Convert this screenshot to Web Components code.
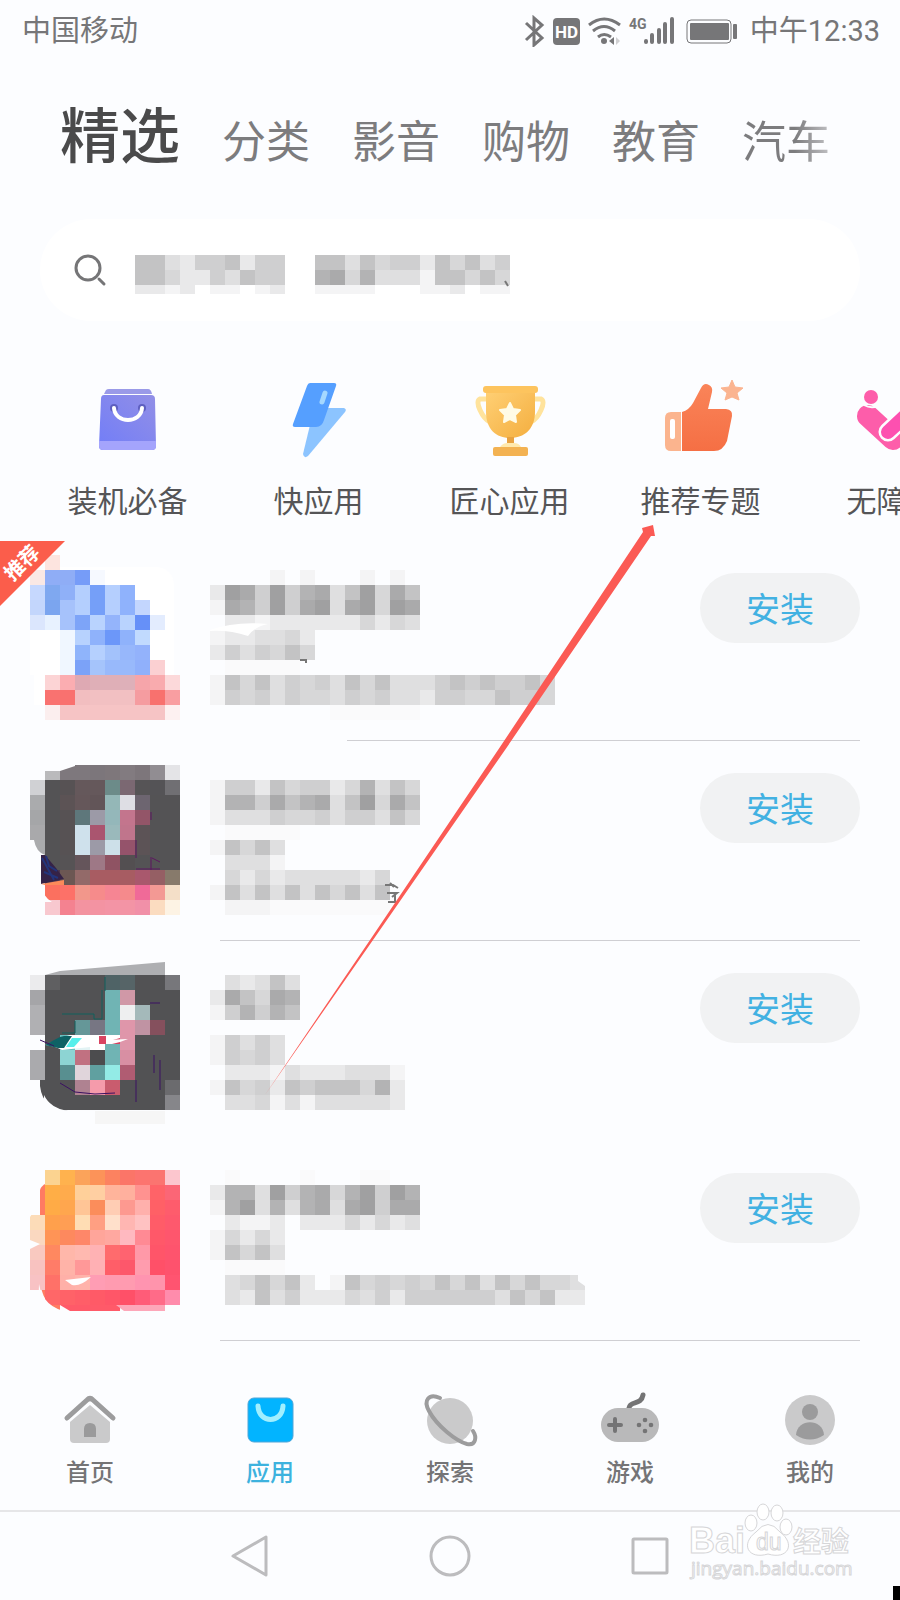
<!DOCTYPE html>
<html lang="zh-CN">
<head>
<meta charset="utf-8">
<meta name="viewport" content="width=device-width, initial-scale=1">
<title>应用市场</title>
<style>
    body {
        margin: 0;
        background: #fcfdff;
        color: #555557;
        font-family: Roboto, "Noto Sans CJK SC", sans-serif;
    }
</style>
</head>
<body>
<app-screen>
    <status-bar></status-bar>
    <category-tabs></category-tabs>
    <search-box></search-box>
    <shortcut-strip>
        <shortcut-item icon="bag">装机必备</shortcut-item>
        <shortcut-item icon="bolt">快应用</shortcut-item>
        <shortcut-item icon="trophy">匠心应用</shortcut-item>
        <shortcut-item icon="thumb">推荐专题</shortcut-item>
        <shortcut-item icon="care">无障碍</shortcut-item>
    </shortcut-strip>
    <main>
        <app-row art="one" class="short-line"><corner-ribbon slot="ribbon">推荐</corner-ribbon>安装</app-row>
        <app-row art="two">安装</app-row>
        <app-row art="three" class="no-line">安装</app-row>
        <app-row art="four">安装</app-row>
    </main>
    <bottom-nav>
        <nav-item icon="home">首页</nav-item>
        <nav-item icon="apps" class="active">应用</nav-item>
        <nav-item icon="planet">探索</nav-item>
        <nav-item icon="pad">游戏</nav-item>
        <nav-item icon="user">我的</nav-item>
    </bottom-nav>
    <system-nav></system-nav>
    <pointer-arrow></pointer-arrow>
</app-screen>

<script>
const CELL = 15;
const GREYS = ["#fafafb", "#f4f4f5", "#e9e9ea", "#dfdfe0", "#d7d7d8", "#cfcfd0", "#c3c3c4", "#b3b3b4", "#aaaaab", "#a0a0a1"];

// digits are grey levels, a dot is an empty cell
function greyRows(x, rows) {
    let out = "";
    for (const y in rows) {
        [...rows[y]].forEach((c, i) => {
            if (c !== ".") out += `<rect x="${x + i * CELL}" y="${y}" width="15" height="15" fill="${GREYS[c]}"/>`;
        });
    }
    return out;
}

// hex colours, a dash is an empty cell
function colorRows(x, rows) {
    let out = "";
    for (const y in rows) {
        rows[y].split(" ").forEach((c, i) => {
            if (c !== "-") out += `<rect x="${x + i * CELL}" y="${y}" width="15" height="15" fill="#${c}"/>`;
        });
    }
    return out;
}

const COVERS = {
    one: {
        top: 541,
        icon: `<path d="M54 567H154Q174 567 174 587V705H34V587Q34 567 54 567z" fill="#fff"/>` + colorRows(30, {
            555: "- fde4df",
            570: "fae8e4 8fadf6 8fadf6 769cf8 f6f9ff",
            585: "c6d8fe 7fa8f0 8fb0f8 b4cffe 759ff8 b5cffe 8fb2fc fff",
            600: "c3d6fc 7ba5ef a6c2fb b4cffe 759ff8 b5cffe 8fb2fc c3d6fe",
            615: "dbe6fd e8f2ff a6c2fb 7da4f8 b9d3fe 94b4fb b9d3fe 6690f8 e3ecfe",
            630: "fff fff f0f7ff b7d2fe 8fb2fb 6c97f9 8fb2fb c1dafe fff",
            645: "fff fff f0f7ff 8fb4fb b5d0fe a3c2fb 97b7fb 93b2fb fff",
            660: "fff fff f0f7ff 7ba2f8 a5c4fb 98b9fb 98b9fb 90b0fb fbd0d2",
            675: "- fcd4d5 fbadb1 dea9b3 dfafb7 dfafb7 deb0b9 f6a5aa f9abae fcd9da",
            690: "- f97270 f9716f f2bec0 f2c0c2 f2c0c2 f2c0c2 f59ca0 f8716e f99ea1",
            705: "- fbeeee f6c4c5 f6c4c5 f6c4c5 f6c4c5 f6c4c5 f6c4c5 f6c4c5 fdf1f1"
        }),
        lines: greyRows(210, {
            570: "....1.1...1.1",
            585: "29859578369486",
            600: "18759589389498",
            615: ".2212222224243",
            630: "1223342",
            645: "2535464",
            660: ".00000",
            675: "16463545364633356565564",
            690: "15453544354533255446554",
            705: "........000000"
        }) + `<path d="M210 630Q235 621 268 624Q254 627 248 636Q230 630 210 631z" fill="#fff"/><path d="M300 660h6v3" fill="none" stroke="#777" stroke-width="2"/>`
    },
    two: {
        top: 741,
        icon: `<path d="M60 771L78 765H150V780H60z" fill="#7e787d"/>` + colorRows(30, {
            765: "- - - 7e787d 7c767b 7e777b 827b80 7d767b 918d92 e4e4e7",
            780: "d0d1d4 545355 575254 65585b 65585b 6c8b89 7b6872 565456 545356 706f73",
            795: "aaabad 545355 5c5355 65575a 625558 94b7b7 dedee4 6d6570 545355 545355",
            810: "a5a6a8 545355 575254 5e777b 9c9aa7 94b7ba c3758d 935568 545355 545355",
            825: "a9a9ab 545355 575254 cfe1ec aa556f 9ab9bb c0758c 5c5356 545355 545355",
            840: "- 545355 575254 cfe1ec 9c9aa7 cde0e9 95536b 5c5356 545355 545355",
            855: "- 545355 565355 65555b 9e7886 8f5363 534f51 545355 545355 545355",
            870: "- 4c3850 6c5753 936a69 a85c62 a85c62 a75c62 a9586d 955f64 877a6b",
            885: "- fb705f fd7168 f2978b f68b8b f68593 f58a8c f06a98 f39994 f4dfc8",
            900: "- f8c8cf f48290 f393a0 f393a2 f394a5 f394a5 f190a8 fbdcc0 fdf3e4"
        }) + `<path d="M45 771H60V780H45z" fill="#bababc"/><path d="M41 855H45L56 868L64 879L41 884z" fill="#352247"/><path d="M42 858l12 22M46 856l3 10l8 5M44 872l14 6" stroke="#23347b" stroke-width="2" fill="none"/><path d="M41 884L64 880V885H45z" fill="#fb8a5a"/><path d="M34 840Q36 852 45 855V840z" fill="#aaabad"/><path d="M41 885Q43 897 52 902H45L40 906z" fill="#fcfdff"/><path d="M151 812v8M136 840v18M151 857v13M136 869h24M152 858l8 4" stroke="#5c1760" fill="none"/>`,
        lines: greyRows(210, {
            780: "15526455247364",
            795: "17758678369486",
            810: "13335445355364",
            825: ".00000",
            840: "16463",
            855: ".3331",
            870: ".42423333324",
            885: "163636364636",
            900: ".11100000000"
        }) + `<path d="M385 885h8l5 3M390 883l4 4M387 893h10l-5 4M388 902h8M395 893v8" fill="none" stroke="#777" stroke-width="2"/>`
    },
    three: {
        top: 941,
        icon: `<path d="M45 975L60 971L165 962V975z" fill="#aeafb2"/>` + colorRows(30, {
            975: "ebebed 5f5f61 525254 525254 525254 4f6366 566467 525254 525254 77777b",
            990: "a5a5a8 525254 525254 525254 525254 70b4b4 d098a7 525254 525254 525254",
            1005: "b0b0b3 525254 525254 525254 525254 70b4b4 eeeff0 a4b9ba 525254 525254",
            1020: "b0b0b3 525254 525254 659798 777683 70b4b4 df96aa c093a3 85505d 525254",
            1035: "- 525254 69c0c0 e2f3f4 fff d7415f df96aa 525254 525254 525254",
            1050: "aaaaad 525254 8dd4d3 c17181 4c4c4e 70b4b4 d88fa3 525254 525254 525254",
            1065: "aaaaad 525254 588f90 e0d5db 60a0a0 93ebe6 b05c72 525254 525254 525254",
            1080: "- 525254 525254 af8291 f59bab c95c6e 525254 525254 525254 6b6b6e",
            1095: "- 525254 525254 525254 525254 525254 525254 525254 525254 86868a"
        }) + `<path d="M40 1080V1086Q43 1110 68 1111H45V1080z" fill="#525254"/><path d="M44 1095Q50 1108 68 1111H44z" fill="#fcfdff"/><path d="M105 1035h15v3q-8 3-15 3z" fill="#fff"/><path d="M45 1045Q62 1037 70 1035H98L104 1040L128 1039Q115 1045 90 1047L62 1050Q55 1046 45 1045z" fill="#fff"/><path d="M45 1045Q52 1041 60 1037L64 1036H72L64 1048H58z" fill="#0d6265"/><path d="M72 1038H82L74 1047H66z" fill="#55efeb"/><path d="M99 1036h7v8h-7z" fill="#d94562"/><path d="M105 1044H120V1050H105z" fill="#70b4b4"/><path d="M62 1014h32v5h8V990M75 1021v12h-13M105 977v14" stroke="#11615d" fill="none"/><path d="M60 1083l15 9 20 2 20-1M136 1080v22M160 1090v-30M154 1055v18M40 1040l14 6M150 1003h10" stroke="#3b1062" fill="none"/><path d="M95 1111h70v13h-70z" fill="#f6f6f6"/>`,
        lines: greyRows(210, {
            975: ".32363",
            990: "286487",
            1005: "157576",
            1035: "15353",
            1050: "15453",
            1065: ".222132223331",
            1080: "1645265666472",
            1095: ".334131333332"
        })
    },
    four: {
        top: 1141,
        icon: `<path d="M40 1190Q42 1182 60 1180V1311Q42 1305 40 1280z" fill="#ff7b62"/>` + colorRows(30, {
            1170: "- fbd390 ffb24e fba35a fc9359 fc8260 fb7568 fc746f fb7470 fcc6ce",
            1185: "- ffae46 ffab4c ffd09a ffcfa2 ffb49b ffb09e ff9290 ff6368 fb6676",
            1200: "- ffab46 ffa64e ffc596 fb8d5b ffcdb4 fd9990 ffb0ac ff6066 fe5c6c",
            1215: "fcdcb8 ffa04c ff9e54 ffddb4 ff9f82 ffe0cb ffb6b2 ffc2c2 ff5c68 fe596d",
            1230: "fad8c0 ff9456 fd895e fe8769 ffa59a ffa8a0 ffb9c0 ff8a94 ff5869 fe566d",
            1245: "f9c9c0 ff8860 ffb7aa ffb9b0 ffb2b4 ff6b6d ff6370 ff99a8 ff5569 fe546d",
            1260: "f8c2c0 ff7c68 ffb3a8 ff9898 ffb0b4 ff5e68 fd576b ff9cae ff5068 fe526d",
            1275: "f8c2c4 ff7168 ffb0a8 ffb3aa ff9db4 ff9bb0 ff9bb0 ff94b0 ff94ac ff5470",
            1290: "- ff6768 ff6268 ff5e68 ff5a67 ff5668 ff5068 ff5c78 ff6b88 ff8cac"
        }) + `<path d="M65 1280L91 1277Q80 1287 72 1285z" fill="#fff"/><path d="M60 1305H120V1311H70z" fill="#ff5a69"/><path d="M116 1305H165V1311H124z" fill="#fda7b9"/><path d="M39 1284Q43 1308 69 1312H38z" fill="#fcfdff"/><path d="M30 1210h10q-8 3-10 7zM30 1240l10 4-10 5z" fill="#fcfdff"/>`,
        lines: greyRows(210, {
            1170: ".0....0...00",
            1185: "27739578479597",
            1200: "17937378389588",
            1215: ".2112.22242423",
            1230: "14242",
            1245: "16463",
            1260: ".0000",
            1275: ".346462.1645454646364644",
            1290: ".326352224352555555364622"
        }) + `<path d="M570 1275h8v6l7 5v4h-15z" fill="#dfdfe0"/>`
    },
    query: {
        lines: greyRows(135, {
            255: "6632556255..6636455264635",
            270: "6642253655..7847333166464",
            285: "2212.11.12..1111...112.11"
        }) + `<path d="M505 281l3 5" stroke="#777" stroke-width="2"/>`
    }
};

const SHORTCUT_ICONS = {
    bag: `<defs><linearGradient id="g" x1="1" y1="0" x2="0" y2="1"><stop stop-color="#928fe6"/><stop offset="1" stop-color="#717df8"/></linearGradient></defs>
        <path d="M16 16L18 12Q19 11 21 11H60Q63 11 64 16z" fill="#9a9ae8"/><path d="M16 17H63Q67 17 67 21L68 68Q68 72 64 72H15Q11 72 11 68L13 21Q13 17 16 17z" fill="url(#g)"/><path d="M11 63H68V68Q68 72 64 72H15Q11 72 11 68z" fill="#a4a4fc"/>
        <circle cx="26" cy="30" r="4" fill="#5e5fc0"/><circle cx="54" cy="30" r="4" fill="#5e5fc0"/><path d="M26 30C27 46 53 46 54 30" fill="none" stroke="#fff" stroke-width="4" stroke-linecap="round"/>`,
    bolt: `<path d="M48 30H65Q68 31 66 34L29 78Q25 81 24 76L31 47z" fill="#8cc4ff"/><path d="M31 5H55Q58 5 57 8L45 42Q43 49 37 49H16Q13 49 14 46L28 8Q29 5 31 5z" fill="#559fff"/><path d="M46 15L43 24" stroke="#a5d8ff" stroke-width="5" stroke-linecap="round"/>`,
    trophy: `<defs><linearGradient id="g" x1="0" y1="0" x2="1" y2="1"><stop stop-color="#ffd075"/><stop offset="1" stop-color="#f4ae3f"/></linearGradient></defs>
        <path d="M16 21H10Q6 23 10 32T20 44M65 21H71Q75 23 71 32T61 44" fill="none" stroke="#ffe39c" stroke-width="5"/><path d="M16 12H65V34C65 51 54 60 40 60S16 51 16 34z" fill="url(#g)"/><rect x="13" y="8" width="55" height="7" rx="3" fill="#fdc45e"/><rect x="37" y="59" width="7" height="9" fill="#e8a241"/><path d="M30 69Q33 65 37 65H44Q49 65 51 69z" fill="#ffe9ae"/><rect x="23" y="69" width="35" height="9" rx="2" fill="#f3b252"/>
        <path d="M40 25l3 6 7 1-5 5 1 7-6-3-6 3 1-7-5-5 7-1z" fill="#fffbe6" stroke="#fffbe6" stroke-width="2" stroke-linejoin="round"/>`,
    thumb: `<defs><linearGradient id="g" x1="0" y1="0" x2="0" y2="1"><stop stop-color="#fa8459"/><stop offset="1" stop-color="#f56f44"/></linearGradient></defs>
        <path d="M20 34H10Q4 34 4 40V67Q4 73 10 73H20z" fill="#fbb48e"/><rect x="9" y="41" width="5" height="20" rx="2" fill="#fff"/><path d="M21 34Q28 32 32 25L40 10Q43 4 48 7Q52 9 51 14L47 31H65Q72 32 71 38L66 63Q62 73 53 73H21z" fill="url(#g)"/><path d="M71 2l3 7 8 1-6 5 2 7-7-3-7 3 2-7-6-5 8-1z" fill="#fbb490" stroke="#fbb490" stroke-linejoin="round"/>`,
    care: `<circle cx="19" cy="19" r="7" fill="#fd5daa"/><path d="M16 38L41 61L68 38" fill="none" stroke="#fd5daa" stroke-width="22" stroke-linecap="round" stroke-linejoin="round"/><path d="M36 54L66 26" stroke="#fcfdff" stroke-width="19" stroke-linecap="round"/><path d="M36 54L66 26" stroke="#fd50b0" stroke-width="14" stroke-linecap="round"/><path d="M12 27Q19 31 26 28" stroke="#fcfdff" stroke-width="2" fill="none"/>`
};

const NAV_ICONS = {
    home: `<path d="M10 32L30 15L50 32V49Q50 53 46 53H14Q10 53 10 49z" fill="#cacacb"/><path d="M7 28L27 10Q30 7 33 10L53 28" fill="none" stroke="#9c9c9d" stroke-width="5" stroke-linecap="round"/><path d="M24 47V39Q24 33 30 33T36 39V47z" fill="#9a9a9b"/>`,
    apps: `<rect x="8" y="8" width="45" height="44" rx="6" fill="#02b4ff" stroke="#4fa6d8"/><path d="M18 16C19 34 42 34 43 16" fill="none" stroke="#a0efff" stroke-width="5" stroke-linecap="round"/>`,
    planet: `<circle cx="30" cy="31" r="23" fill="#cacacb"/><path d="M20 8C9 3 3 10 9 21C17 36 36 51 47 54C56 56 57 47 53 41" fill="none" stroke="#9c9c9d" stroke-width="4" stroke-linecap="round"/>`,
    pad: `<path d="M29 18C30 10 41 16 43 5" fill="none" stroke="#747475" stroke-width="5" stroke-linecap="round"/><rect x="1" y="18" width="58" height="34" rx="17" fill="#b9b9ba"/><path d="M9 35H21M15 29V41" stroke="#747475" stroke-width="4" stroke-linecap="round"/><g fill="#747475"><circle cx="39" cy="35" r="2.300"/><circle cx="51" cy="35" r="2.300"/><circle cx="45" cy="30" r="2.300"/><circle cx="45" cy="41" r="2.300"/></g>`,
    user: `<circle cx="30" cy="30" r="25" fill="#cacacb"/><circle cx="30" cy="22" r="8" fill="#9b9b9c"/><path d="M16 45C17 28 43 28 44 45Q30 54 16 45z" fill="#9b9b9c"/>`
};

class AppScreen extends HTMLElement {
    constructor() {
        super();
        this.attachShadow({mode: "open"}).innerHTML = `
        <style>
            :host { display: block; position: relative; overflow: hidden; }
        </style>
        <slot></slot>`;
    }
}

class StatusBar extends HTMLElement {
    constructor() {
        super();
        this.attachShadow({mode: "open"}).innerHTML = `
        <style>
            :host { display: flex; align-items: center; height: 62px; padding: 0 20px 0 22px; color: #767678; font-size: 29px; line-height: 40px; }
            span { flex: 1; }
            svg { margin-right: 10px; }
        </style>
        <span>中国移动</span>
        <svg width="216" height="32" viewBox="524 14 216 32" fill="#767678">
            <path d="M526 22L542 37L534 44V17L542 24L526 39" fill="none" stroke="#767678" stroke-width="3"/>
            <rect x="553" y="17" width="27" height="27" rx="4"/>
            <text x="555" y="37" font-family="Roboto" font-weight="700" font-size="17" fill="#fff">HD</text>
            <g fill="none" stroke="#767678" stroke-width="3"><path d="M589 24Q604 12 620 24M593 30Q604 21 615 30M598 36Q604 31 611 36"/></g>
            <circle cx="604" cy="40" r="3"/><path d="M609 40l5-4v8z"/><path d="M616 36l4 4-4 4z" fill="#d0d0d2"/>
            <text x="629" y="28" font-family="Roboto" font-weight="700" font-size="14">4G</text>
            <g stroke="#767678" stroke-width="4" stroke-linecap="round"><path d="M646 40v1M652 34v7M659 29v12M665 23v18M672 18v23"/></g>
            <rect x="687" y="19" width="44" height="23" rx="4" fill="none" stroke="#767678" stroke-width="1"/><rect x="690" y="22" width="39" height="17" rx="1"/><rect x="733" y="23" width="4" height="15" rx="1"/>
        </svg>
        <time>中午12:33</time>`;
    }
}

class CategoryTabs extends HTMLElement {
    constructor() {
        super();
        this.attachShadow({mode: "open"}).innerHTML = `
        <style>
            :host { display: block; padding: 46px 60px 0; }
            nav { display: flex; align-items: baseline; gap: 42px; white-space: nowrap; }
            a { color: #7c7c7e; font-size: 44px; line-height: 60px; text-decoration: none; }
            a.active { color: #4a4a4b; font-size: 60px; font-weight: 500; }
            a:last-child { background: linear-gradient(90deg, #7c7c7e 60%, #c0c0c3); -webkit-background-clip: text; color: transparent; }
        </style>
        <nav>
            <a href="#" class="active">精选</a><a href="#">分类</a><a href="#">影音</a><a href="#">购物</a><a href="#">教育</a><a href="#">汽车</a>
        </nav>`;
    }
}

class SearchBox extends HTMLElement {
    constructor() {
        super();
        this.attachShadow({mode: "open"}).innerHTML = `
        <style>
            :host { display: block; margin: 46px 40px 0; }
            label { display: grid; grid-template-columns: 34px 61px 1fr; align-items: center; height: 102px; border-radius: 51px; background: #fff; }
            .glass { grid-area: 1 / 2; }
            .cover, input { grid-area: 1 / 3; }
            rect { shape-rendering: crispEdges; }
            input { height: 60px; border: 0; outline: 0; background: none; font: inherit; font-size: 30px; }
        </style>
        <label>
            <svg class="glass" width="34" height="34" fill="none" stroke="#757577" stroke-width="3" stroke-linecap="round"><circle cx="14" cy="15" r="12"/><path d="M25 26L30 31"/></svg>
            <svg class="cover" width="380" height="48" viewBox="135 246 380 48">${COVERS.query.lines}</svg>
            <input type="search" aria-label="搜索">
        </label>`;
    }
}

class ShortcutStrip extends HTMLElement {
    constructor() {
        super();
        this.attachShadow({mode: "open"}).innerHTML = `
        <style>
            :host { display: flex; overflow: hidden; padding: 57px 0 19px 32px; }
        </style>
        <slot></slot>`;
    }
}

class ShortcutItem extends HTMLElement {
    connectedCallback() {
        this.attachShadow({mode: "open"}).innerHTML = `
        <style>
            :host { display: block; flex: 0 0 191px; }
            a { display: flex; flex-direction: column; align-items: center; gap: 24px; color: #555557; font-size: 30px; line-height: 40px; text-decoration: none; }
            svg { overflow: visible; }
        </style>
        <a href="#"><svg width="80" height="80">${SHORTCUT_ICONS[this.getAttribute("icon")]}</svg><slot></slot></a>`;
    }
}

class CornerRibbon extends HTMLElement {
    constructor() {
        super();
        this.attachShadow({mode: "open"}).innerHTML = `
        <style>
            :host { display: block; position: absolute; top: 0; left: 0; width: 65px; height: 65px; background: #fb5d4b; clip-path: polygon(0 0, 100% 0, 0 100%); }
            span { display: block; width: 44px; height: 44px; font-size: 20px; font-weight: 700; line-height: 44px; color: #fff; text-align: center; transform: rotate(-45deg); }
        </style>
        <span><slot></slot></span>`;
    }
}

class AppRow extends HTMLElement {
    connectedCallback() {
        const art = COVERS[this.getAttribute("art")];
        this.attachShadow({mode: "open"}).innerHTML = `
        <style>
            :host { display: block; position: relative; --line: #cfcfd3; --start: 220px; }
            :host(.short-line) { --start: 347px; }
            :host(.no-line) { --line: transparent; }
            .row { display: flex; align-items: flex-start; padding-right: 40px; }
            .lines { flex: 1; min-width: 0; }
            svg { display: block; }
            rect { shape-rendering: crispEdges; }
            button { width: 160px; height: 70px; margin-top: 32px; padding: 4px 0 0; border: 0; border-radius: 35px; background: #f1f2f3; color: #42b1e2; font: inherit; font-size: 34px; line-height: 66px; }
            hr { height: 1px; margin: 0 40px 0 var(--start); border: 0; background: var(--line); }
        </style>
        <div class="row">
            <svg width="210" height="199" viewBox="0 ${art.top} 210 199">${art.icon}</svg>
            <div class="lines"><svg width="400" height="199" viewBox="210 ${art.top} 400 199">${art.lines}</svg></div>
            <button type="button"><slot></slot></button>
        </div>
        <hr>
        <slot name="ribbon"></slot>`;
    }
}

class BottomNav extends HTMLElement {
    constructor() {
        super();
        this.attachShadow({mode: "open"}).innerHTML = `
        <style>
            :host { display: block; }
            nav { display: flex; padding: 49px 0 22px; border-bottom: 2px solid #e6e6e8; }
        </style>
        <nav><slot></slot></nav>`;
    }
}

class NavItem extends HTMLElement {
    connectedCallback() {
        this.attachShadow({mode: "open"}).innerHTML = `
        <style>
            :host { display: block; flex: 1; color: #747476; }
            :host(.active) { color: #3db2de; }
            a { display: flex; flex-direction: column; align-items: center; gap: 8px; color: inherit; font-size: 24px; font-weight: 500; line-height: 30px; text-decoration: none; }
        </style>
        <a href="#"><svg width="60" height="60">${NAV_ICONS[this.getAttribute("icon")]}</svg><slot></slot></a>`;
    }
}

class SystemNav extends HTMLElement {
    constructor() {
        super();
        this.attachShadow({mode: "open"}).innerHTML = `
        <style>
            :host { display: block; position: relative; }
            nav { display: flex; justify-content: center; align-items: center; gap: 156px; height: 88px; }
            button { width: 44px; height: 44px; padding: 0; border: 0; background: none; }
            button svg { display: block; fill: none; stroke: #bcbcbe; stroke-width: 3; stroke-linejoin: round; }
            .mark { position: absolute; right: 40px; bottom: 12px; overflow: visible; }
            .corner { position: absolute; right: 0; bottom: 0; width: 7px; height: 14px; background: #000; }
        </style>
        <nav>
            <button type="button" aria-label="返回"><svg width="44" height="44"><path d="M38 3V41L5 22z"/></svg></button>
            <button type="button" aria-label="主屏幕"><svg width="44" height="44"><circle cx="22" cy="22" r="19"/></svg></button>
            <button type="button" aria-label="最近任务"><svg width="44" height="44"><rect x="5" y="5" width="34" height="34" rx="1"/></svg></button>
        </nav>
        <svg class="mark" width="172" height="86" viewBox="688 1502 172 86" fill="#fff" stroke="#d6d6d8" stroke-width="1">
            <text x="689" y="1553" font-family="Liberation Sans" font-weight="700" font-size="36">Bai</text>
            <ellipse cx="751" cy="1523" rx="6" ry="8"/><ellipse cx="763" cy="1512" rx="6" ry="8"/><ellipse cx="777" cy="1513" rx="6" ry="8"/><ellipse cx="786" cy="1527" rx="6" ry="8"/>
            <path d="M756 1532Q768 1517 780 1532C796 1544 788 1560 768 1554C748 1560 740 1544 756 1532z"/>
            <text x="756" y="1550" font-family="Liberation Sans" font-size="23">du</text>
            <text x="793" y="1552" font-family="Noto Sans CJK SC" font-weight="700" font-size="28">经验</text>
            <text x="691" y="1575" font-family="Open Sans" font-size="19">jingyan.baidu.com</text>
        </svg>
        <div class="corner"></div>`;
    }
}

class PointerArrow extends HTMLElement {
    constructor() {
        super();
        this.attachShadow({mode: "open"}).innerHTML = `
        <style>
            :host { display: block; position: absolute; top: 0; left: 0; pointer-events: none; }
            svg { display: block; }
        </style>
        <svg width="700" height="1100" fill="#fb5a54"><path d="M265 1095L370 940L498 750L643 532L642 528L653 525L655 536L651 536L505 750L373 940z"/></svg>`;
    }
}

customElements.define("app-screen", AppScreen);
customElements.define("status-bar", StatusBar);
customElements.define("category-tabs", CategoryTabs);
customElements.define("search-box", SearchBox);
customElements.define("shortcut-strip", ShortcutStrip);
customElements.define("shortcut-item", ShortcutItem);
customElements.define("corner-ribbon", CornerRibbon);
customElements.define("app-row", AppRow);
customElements.define("bottom-nav", BottomNav);
customElements.define("nav-item", NavItem);
customElements.define("system-nav", SystemNav);
customElements.define("pointer-arrow", PointerArrow);
</script>
</body>
</html>
